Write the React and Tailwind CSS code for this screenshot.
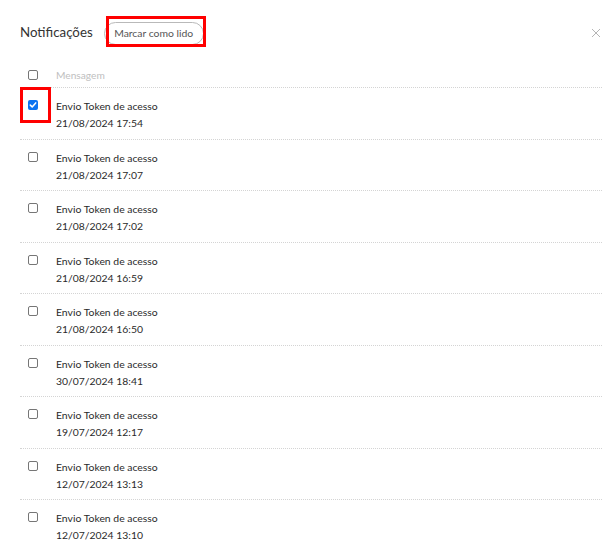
import React from "react";

const rows = [
  "21/08/2024 17:54",
  "21/08/2024 17:07",
  "21/08/2024 17:02",
  "21/08/2024 16:59",
  "21/08/2024 16:50",
  "30/07/2024 18:41",
  "19/07/2024 12:17",
  "12/07/2024 13:13",
  "12/07/2024 13:10",
];

function Box({ checked }) {
  if (checked) {
    return (
      <div className="w-[10px] h-[10px] rounded-[2px] bg-[#0b73f0] flex items-center justify-center">
        <svg width="8" height="8" viewBox="0 0 8 8">
          <path d="M1.3 4.1 L3.2 5.9 L6.7 1.9" fill="none" stroke="white" strokeWidth="1.5" strokeLinecap="round" strokeLinejoin="round" />
        </svg>
      </div>
    );
  }
  return <div className="w-[10px] h-[10px] rounded-[2px] border border-[#767676] bg-white" />;
}

export default function App() {
  return (
    <div className="relative w-[615px] h-[544px] bg-white overflow-hidden text-[#222]" style={{ fontFamily: 'Lato, "Noto Sans", sans-serif' }}>
      <div className="px-[20px]">
        <div className="flex items-center h-[34px] mt-[16px]">
          <span className="text-[13.3px] text-[#333]">Notificações</span>
          <button className="ml-[11px] h-[23px] w-[100px] rounded-full border border-[#b9b9b9] text-[10.4px] text-[#555] bg-white leading-none">
            Marcar como lido
          </button>
          <span className="ml-auto mr-[-6px] text-[#bbb]">
            <svg width="10" height="10" viewBox="0 0 10 10">
              <path d="M1 1 L9 9 M9 1 L1 9" stroke="#b5b5b5" strokeWidth="1" />
            </svg>
          </span>
        </div>
        <div className="mt-[10px] h-[28px] pt-[2px] flex items-center border-b border-dotted border-[#d4d4d4] w-[582px]">
          <div className="w-[36px] flex pl-[8px]"><Box /></div>
          <span className="text-[10.2px] text-[#c0c0c0] pt-[2px]">Mensagem</span>
        </div>
        {rows.map((d, i) => (
          <div key={i} className="h-[51.5px] flex border-b border-dotted border-[#d4d4d4] w-[582px]">
            <div className="w-[36px] flex pl-[8px] pt-[12px]"><Box checked={i === 0} /></div>
            <div className="pt-[10px] text-[10.4px] leading-[17px] text-[#2a2a2a]">
              <div>Envio Token de acesso</div>
              <div>{d}</div>
            </div>
          </div>
        ))}
      </div>
      <div className="absolute left-[106px] top-[16px] w-[100px] h-[31px] border-[3px] border-[#f00] pointer-events-none" />
      <div className="absolute left-[20px] top-[87px] w-[31px] h-[36px] border-[3px] border-[#f00] pointer-events-none" />
    </div>
  );
}
